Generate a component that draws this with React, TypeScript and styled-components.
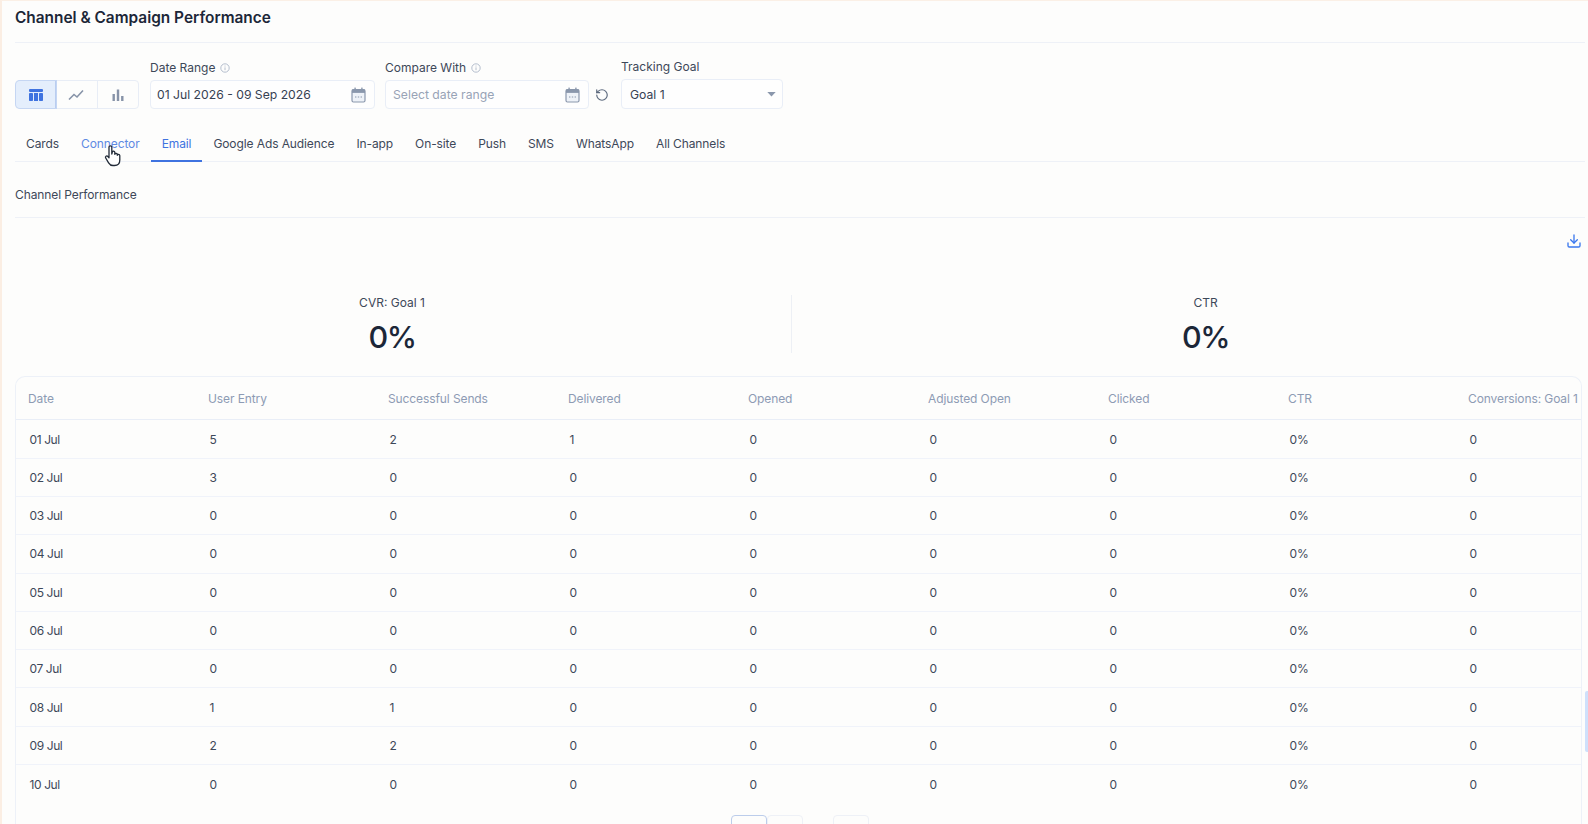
import React from "react";
import styled, { createGlobalStyle } from "styled-components";
import { RotateCcw, Download } from "lucide-react";

const Global = createGlobalStyle`
  html, body { margin: 0; padding: 0; background: #fdfdfc; }
  * { box-sizing: border-box; }
`;

const Page = styled.div`
  position: relative;
  width: 1588px;
  height: 824px;
  overflow: hidden;
  background: #fdfdfc;
  border-left: 2px solid #fbeee3;
  border-top: 1px solid #fbf0e6;
  padding: 0 3px 0 13px;
  font-family: Inter, "Liberation Sans", sans-serif;
  color: #2f3a4c;
`;

const Header = styled.div`
  height: 42px;
  padding-top: 6px;
  border-bottom: 1px solid #eef1f7;
`;

const Title = styled.h1`
  margin: 0;
  font-size: 15.4px;
  line-height: 22px;
  font-weight: 600;
  color: #1c2738;
`;

const Filters = styled.div`
  display: flex;
  align-items: flex-end;
  height: 66px;
`;

const Toggle = styled.div`
  display: flex;
  width: 124px;
  height: 29px;
  margin-right: 11px;
  border: 1px solid #e8edf6;
  border-radius: 4px;
`;

const ToggleButton = styled.div<{ $active?: boolean }>`
  flex: ${(p) => (p.$active ? "0 0 40px" : "1")};
  display: flex;
  align-items: center;
  justify-content: center;
  color: ${(p) => (p.$active ? "#3f73e0" : "#8793a8")};
  background: ${(p) => (p.$active ? "#e4eefc" : "transparent")};
  border-right: 1px solid ${(p) => (p.$active ? "#b9cdf0" : "#e8edf6")};
  box-shadow: ${(p) => (p.$active ? "0 0 0 1px #c5d6f3" : "none")};
  border-radius: ${(p) => (p.$active ? "4px 0 0 4px" : "0")};
  &:last-child { border-right: none; }
`;

const Field = styled.div<{ $width: number }>`
  width: ${(p) => p.$width}px;
  display: flex;
  flex-direction: column;
  gap: 4px;
`;

const Label = styled.div`
  display: flex;
  align-items: center;
  gap: 5px;
  font-size: 12px;
  line-height: 16px;
  color: #3d4859;
`;

const InputBox = styled.div<{ $tall?: boolean; $caret?: boolean }>`
  height: ${(p) => (p.$tall ? "30px" : "29px")};
  display: flex;
  align-items: center;
  justify-content: space-between;
  padding: 0 ${(p) => (p.$caret ? "6px" : "8px")} 0 ${(p) => (p.$caret ? "8px" : "6px")};
  border: 1px solid #e9eef7;
  border-radius: 4px;
  font-size: 12.2px;
  color: #364152;
  background: #fefefe;
`;

const Placeholder = styled.span`
  color: #98a3b6;
  margin-left: 1px;
`;

const ResetSlot = styled.div`
  width: 32px;
  height: 29px;
  padding-right: 6px;
  display: flex;
  align-items: center;
  justify-content: center;
  color: #5d6a7e;
`;

const Spacer = styled.div<{ $w: number }>`
  width: ${(p) => p.$w}px;
  flex: none;
`;

const Tabs = styled.div`
  display: flex;
  height: 53px;
  padding-top: 21px;
  border-bottom: 1px solid #eef1f7;
`;

const Tab = styled.div<{ $state?: "active" | "hover" }>`
  padding: 0 11px;
  height: 32px;
  margin-bottom: -1px;
  line-height: 28px;
  font-size: 12px;
  letter-spacing: -0.1px;
  white-space: nowrap;
  color: ${(p) => (p.$state === "active" ? "#3f73e0" : p.$state === "hover" ? "#5f8ae3" : "#3d4859")};
  border-bottom: 2px solid ${(p) => (p.$state === "active" ? "#3f73e0" : "transparent")};
`;

const Section = styled.div`
  height: 56px;
  padding-top: 25px;
  font-size: 12px;
  letter-spacing: -0.1px;
  line-height: 16px;
  color: #3d4859;
  border-bottom: 1px solid #eef1f7;
`;

const Toolbar = styled.div`
  display: flex;
  justify-content: flex-end;
  height: 24px;
  padding-top: 15px;
  padding-right: 3px;
  color: #3b78ee;
`;

const Kpis = styled.div`
  display: flex;
  margin-top: 53px;
  height: 58px;
`;

const Kpi = styled.div<{ $width: number; $left: number; $right: number; $divider?: boolean }>`
  width: ${(p) => p.$width}px;
  flex: none;
  text-align: center;
  padding: 0 ${(p) => p.$right}px 0 ${(p) => p.$left}px;
  border-right: ${(p) => (p.$divider ? "1px solid #edf0f5" : "none")};
`;

const KpiLabel = styled.div`
  font-size: 12px;
  line-height: 16px;
  color: #3d4859;
`;

const KpiValue = styled.div`
  font-size: 30.5px;
  line-height: 40px;
  font-weight: 500;
  letter-spacing: -1.5px;
  color: #1c2738;
  margin-top: 6px;
`;

const TableCard = styled.div`
  margin-top: 23px;
  width: 1567px;
  height: 460px;
  overflow: hidden;
  border: 1px solid #edf1f8;
  border-bottom: none;
  border-radius: 10px 10px 0 0;
`;

const Row = styled.div<{ $head?: boolean }>`
  display: grid;
  grid-template-columns: repeat(9, 180px);
  width: 1620px;
  height: ${(p) => (p.$head ? "43.4px" : "38.3px")};
  align-items: center;
  padding-left: 12px;
  border-bottom: 1px solid ${(p) => (p.$head ? "#e9eef7" : "#f0f3fa")};
  font-size: 12px;
  letter-spacing: ${(p) => (p.$head ? "-0.1px" : "0")};
  color: ${(p) => (p.$head ? "#8d9bb4" : "#3d4859")};
`;

const BodyCell = styled.div`
  padding-left: 1.5px;
`;

const DateCell = styled(BodyCell)`
  letter-spacing: -0.4px;
`;

const LastRow = styled(Row)`
  border-bottom: none;
`;

const Pager = styled.div`
  display: flex;
  justify-content: center;
  padding-left: 2px;
  margin-top: 12px;
`;

const PageBtn = styled.div<{ $active?: boolean; $gap?: number }>`
  width: 36px;
  height: 30px;
  margin-left: ${(p) => p.$gap ?? 0}px;
  border: 1px solid ${(p) => (p.$active ? "#bccdeb" : "#eef1f7")};
  border-radius: 4px;
`;

const SideHandle = styled.div`
  position: absolute;
  right: 0;
  top: 690px;
  width: 3px;
  height: 61px;
  background: #cfe0fb;
  border-radius: 2px 0 0 2px;
`;

const Cursor = styled.svg`
  position: absolute;
  left: 101px;
  top: 143px;
`;

const TableIcon = () => (
  <svg width="16" height="14" viewBox="0 0 16 14" fill="currentColor">
    <rect x="1" y="1" width="14" height="3" rx="1" />
    <rect x="1" y="5" width="4" height="8" rx="0.8" />
    <rect x="6" y="5" width="4" height="8" />
    <rect x="11" y="5" width="4" height="8" rx="0.8" />
  </svg>
);

const LineIcon = () => (
  <svg width="16" height="12" viewBox="0 0 16 12" fill="none" stroke="currentColor" strokeWidth="1.6">
    <path d="M1 10.5 L6 5.5 L9 8 L15 1.5" />
  </svg>
);

const BarIcon = () => (
  <svg width="12" height="12" viewBox="0 0 12 12" fill="currentColor">
    <rect x="0.5" y="5" width="2.4" height="7" />
    <rect x="4.800" y="0.5" width="2.4" height="11.5" />
    <rect x="9.100" y="7" width="2.4" height="5" />
  </svg>
);

const CalendarIcon = () => (
  <svg width="15" height="16" viewBox="0 0 15 16" fill="none" color="#8a97ac">
    <rect x="1" y="2.5" width="13" height="12.5" rx="1.5" stroke="currentColor" strokeWidth="1.2" fill="#eef2f8" />
    <rect x="1" y="2.5" width="13" height="3.4" fill="currentColor" />
    <rect x="3.4" y="0.6" width="1.4" height="3" fill="currentColor" />
    <rect x="10.2" y="0.6" width="1.4" height="3" fill="currentColor" />
    <path d="M4 10h1.4M6.8 10h1.4M9.600 10H11" stroke="currentColor" strokeWidth="1.1" />
  </svg>
);

const InfoIcon = () => (
  <svg width="10" height="10" viewBox="0 0 10 10" fill="none" stroke="#a3afc2" strokeWidth="0.8">
    <circle cx="5" cy="5" r="4.2" />
    <path d="M5 4.4v2.8M5 2.6v.9" />
  </svg>
);

const Caret = () => (
  <svg width="9" height="5" viewBox="0 0 10 6" fill="#8a97ac">
    <path d="M0 0h10L5 5.500z" />
  </svg>
);

const columns = ["Date", "User Entry", "Successful Sends", "Delivered", "Opened", "Adjusted Open", "Clicked", "CTR", "Conversions: Goal 1"];
const rows: [string, number, number, number][] = [
  ["01 Jul", 5, 2, 1],
  ["02 Jul", 3, 0, 0],
  ["03 Jul", 0, 0, 0],
  ["04 Jul", 0, 0, 0],
  ["05 Jul", 0, 0, 0],
  ["06 Jul", 0, 0, 0],
  ["07 Jul", 0, 0, 0],
  ["08 Jul", 1, 1, 0],
  ["09 Jul", 2, 2, 0],
  ["10 Jul", 0, 0, 0],
];
const tabs = ["Cards", "Connector", "Email", "Google Ads Audience", "In-app", "On-site", "Push", "SMS", "WhatsApp", "All Channels"];

export default function App() {
  return (
    <Page>
      <Global />
      <Header>
        <Title>Channel &amp; Campaign Performance</Title>
      </Header>
      <Filters>
        <Toggle>
          <ToggleButton $active><TableIcon /></ToggleButton>
          <ToggleButton><LineIcon /></ToggleButton>
          <ToggleButton><BarIcon /></ToggleButton>
        </Toggle>
        <Field $width={225}>
          <Label>Date Range <InfoIcon /></Label>
          <InputBox>01 Jul 2026 - 09 Sep 2026<CalendarIcon /></InputBox>
        </Field>
        <Spacer $w={10} />
        <Field $width={204}>
          <Label>Compare With <InfoIcon /></Label>
          <InputBox><Placeholder>Select date range</Placeholder><CalendarIcon /></InputBox>
        </Field>
        <ResetSlot><RotateCcw size={14} strokeWidth={2} /></ResetSlot>
        <Field $width={162}>
          <Label>Tracking Goal</Label>
          <InputBox $tall $caret>Goal 1<Caret /></InputBox>
        </Field>
      </Filters>
      <Tabs>
        {tabs.map((t) => (
          <Tab key={t} $state={t === "Email" ? "active" : t === "Connector" ? "hover" : undefined}>{t}</Tab>
        ))}
      </Tabs>
      <Section>Channel Performance</Section>
      <Toolbar><Download size={16} strokeWidth={2} /></Toolbar>
      <Kpis>
        <Kpi $width={777} $left={0} $right={22} $divider>
          <KpiLabel>CVR: Goal 1</KpiLabel>
          <KpiValue>0%</KpiValue>
        </Kpi>
        <Kpi $width={793} $left={34} $right={0}>
          <KpiLabel>CTR</KpiLabel>
          <KpiValue>0%</KpiValue>
        </Kpi>
      </Kpis>
      <TableCard>
        <Row $head>
          {columns.map((c) => <div key={c}>{c}</div>)}
        </Row>
        {rows.map((r, i) => {
          const Line = i === rows.length - 1 ? LastRow : Row;
          return (
            <Line key={r[0]}>
              <DateCell>{r[0]}</DateCell>
              <BodyCell>{r[1]}</BodyCell>
              <BodyCell>{r[2]}</BodyCell>
              <BodyCell>{r[3]}</BodyCell>
              <BodyCell>0</BodyCell>
              <BodyCell>0</BodyCell>
              <BodyCell>0</BodyCell>
              <BodyCell>0%</BodyCell>
              <BodyCell>0</BodyCell>
            </Line>
          );
        })}
        <Pager>
          <PageBtn $active />
          <PageBtn />
          <PageBtn $gap={30} />
        </Pager>
      </TableCard>
      <SideHandle />
      <Cursor width="20" height="24" viewBox="0 0 20 24" fill="#fff" stroke="#222b38" strokeWidth="1.3" strokeLinejoin="round">
        <path d="M6 3.2a1.4 1.4 0 0 1 2.8 0V10l.5-2a1.3 1.3 0 0 1 2.5.1v2.2a1.3 1.3 0 0 1 2.5 0v1a1.3 1.3 0 0 1 2.5.2v4.5c0 3.2-2 5.5-5.3 5.5H10c-2.2 0-3.4-1-4.4-2.7L2.7 14c-.9-1.5 1-2.8 2.2-1.5L6 13.700z" />
      </Cursor>
    </Page>
  );
}
